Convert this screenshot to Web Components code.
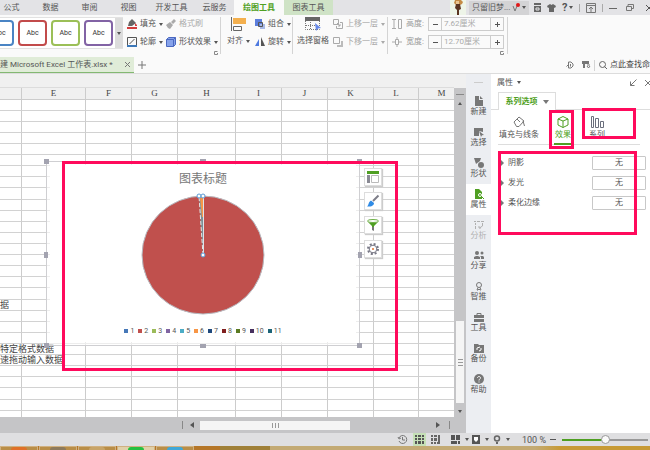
<!DOCTYPE html>
<html>
<head>
<meta charset="utf-8">
<title>Microsoft Excel 工作表.xlsx</title>
<style>
html,body{margin:0;height:100%;overflow:hidden}
body{--ink:#555;--dim:#aaa;--line:#d4d4d4;--green:#4f9f22;--mark:#ff0a5c;
 font:8px/12px Roboto,"Noto Sans CJK SC",sans-serif;color:var(--ink);background:#fafafa}
</style>
</head>
<body>
<office-app></office-app>
<script>
const BASE = `*{box-sizing:border-box}
button,input{font:inherit;color:inherit;background:none;border:0;padding:0;margin:0}
button{display:flex;align-items:center;white-space:nowrap}
svg{display:block;flex:none;overflow:visible}
.caret{width:0;height:0;border:2px solid transparent;border-top:3px solid currentColor;border-bottom:0;flex:none}
.sep{width:1px;background:var(--line);flex:none}`;
function define(name, css, html){
  customElements.define(name, class extends HTMLElement{
    connectedCallback(){
      if(this.shadowRoot) return;
      const root = this.attachShadow({mode:'open'});
      root.innerHTML = '<style>'+BASE+css+'</style>'+(typeof html==='function'?html(this):html);
    }
  });
}
const svg = (w,h,body) => `<svg width="${w}" height="${h}" viewBox="0 0 ${w} ${h}" fill="none" aria-hidden="true">${body}</svg>`;

/* ---------- title bar with ribbon tabs ---------- */
define('menu-tabs', `
:host{display:flex;height:15px;background:#e3e3e6;overflow:hidden}
nav{display:flex;flex:1;min-width:0}
nav button{justify-content:center;width:39px;flex:none}
nav button:first-child{width:31px;padding-right:8px}
nav button.wide{width:47px}
nav button.cur{width:50px;background:#fafafa;color:var(--green);font-weight:700}
nav button.alt{width:49px;background:#cfe3c6}
.user{display:flex;align-items:center;flex:none}
.who{height:14px;background:#d3d3d5;padding:0 3px;width:60px;justify-content:space-between;margin-left:3px}
.user button{height:14px}
.sys{gap:6px;display:flex;align-items:center;padding-left:5px;flex:none;width:121px}
.sys .sep{height:8px;background:#aaa}
.help{gap:2px;font-size:11px;font-weight:700}
`, `<nav><button>公式</button><button>数据</button><button>审阅</button><button>视图</button><button class="wide">开发工具</button><button>云服务</button><button class="cur">绘图工具</button><button class="alt">图表工具</button></nav>
<div class="user">${svg(16,15,'<path fill="#eef5e8" d="M0 0h16v15H0z"/><path fill="#c58b45" d="M5 0h6l2 2-1 2-2 1H6L4 3z"/><path fill="#5b3522" d="M6 4h4l1 5-2 1v5H7v-5L5 8z"/><path fill="#e9c592" d="M6 1h3v3H6z"/>')}
<button class="who"><span>只留旧梦...</span>${svg(8,12,'<path d="M1 4l2 5 2-5" stroke="#777"/><circle cx="6" cy="3" r="2" fill="#e01818"/>')}<i class="caret"></i></button></div>
<div class="sys">
<button aria-label="皮肤">${svg(7,9,'<path fill="#666" d="M0 0h7v2H0zM0 3h7v6H0z"/><path stroke="#e3e3e6" d="M2 5h3v2H2z"/>')}</button>
<button aria-label="外观">${svg(9,8,'<path fill="#666" d="M3 0l1.500 1L6 0l3 2-1 2-1-.5V8H2V3.500L1 4 0 2z"/>')}</button>
<button class="help" aria-label="帮助">?<i class="caret"></i></button>
<i class="sep"></i>
<button aria-label="功能区">${svg(10,10,'<path stroke="#777" d="M.5.500h9v9h-9zM0 2.500h10M5 9V4.500M3 6l2-2 2 2"/>')}</button>
<i class="sep"></i>
<button aria-label="最小化">${svg(8,8,'<path stroke="#666" d="M0 4.500h8"/>')}</button>
<button aria-label="还原" style="margin-left:3px">${svg(8,8,'<path stroke="#777" d="M2 2.500V.500h5.500v4H6M.5 2.500H5.500v4H.500z"/>')}</button>
<button aria-label="关闭" style="margin-left:6px">${svg(6,6,'<path stroke="#555" d="M0 0l6 6M6 0L0 6"/>')}</button></div>`);

/* ---------- ribbon ---------- */
define('style-swatch', `:host{display:block;width:29px;flex:none}
button{width:100%;height:26px;justify-content:center;border:2px solid var(--c);border-radius:4px;background:#fff;color:#333;font-size:7px}`,
 el => `<button style="--c:${el.getAttribute('color')}"><slot></slot></button>`);

define('tool-button', `:host{display:block;flex:none}
:host([off]){color:var(--dim)}
button{gap:3px;height:14px}
:host([tall]) button{flex-direction:column;height:30px;justify-content:space-between}
.t{display:flex;align-items:center;gap:3px}`,
 el => `<button><slot name="icon"></slot><span class="t"><slot></slot>${el.hasAttribute('menu')?'<i class="caret"></i>':''}</span></button>`);

define('size-field', `:host{display:flex;align-items:center;gap:4px;color:#999;height:14px}
label{width:18px;white-space:nowrap}
.f{display:flex;border:1px solid #ccc;height:14px;width:76px}
.f button{width:12px;justify-content:center;color:#555;flex:none}
input{flex:1;min-width:0;width:10px;border:solid #ccc;border-width:0 1px;padding-left:2px;color:#aaa}`,
 el => `<slot name="icon"></slot><label for="v">${el.getAttribute('label')}:</label><div class="f"><button aria-label="减">${svg(5,5,'<path stroke="#555" d="M0 2.500h5"/>')}</button><input id="v" value="${el.getAttribute('value')}"><button aria-label="加">${svg(5,5,'<path stroke="#555" d="M0 2.500h5M2.500 0v5"/>')}</button></div>`);

const ic = s => s.replace('<svg','<svg slot="icon"');
const corner = svg(4,4,'<path stroke="#888" d="M3.500.500h-3v3h3V2"/>');
define('ribbon-bar', `
:host{display:flex;height:42px;background:#fafafa;padding-top:2px;overflow:hidden}
.gal{display:flex;align-items:center;gap:4px;width:123px;height:32px;overflow:hidden;border:1px solid #e2e2e2;border-left:0;border-right:0;justify-content:flex-end;flex:none;background:#fff}
.gal button{width:8px;height:32px;background:#dcdcdc;justify-content:center;margin-left:-2px;flex:none}
.col{display:flex;flex-direction:column;gap:4px;flex:none}
.grp{display:flex;padding-left:4px;flex:none}
.sep{height:37px}
.corner{align-self:flex-end;margin:0 0 2px -4px;flex:none}
`, `<div class="gal"><style-swatch color="#4a84c4">Abc</style-swatch><style-swatch color="#c24b4b">Abc</style-swatch><style-swatch color="#9bbf57">Abc</style-swatch><style-swatch color="#8263a5">Abc</style-swatch><button aria-label="更多"><i class="caret"></i></button></div>
<div class="grp" style="width:97px;gap:4px">
 <div class="col" style="width:35px"><tool-button menu>${ic(svg(10,10,'<path fill="#666" d="M2 3l3-3 4 4-4 3H1z"/><path fill="#d23c3c" d="M0 8h10v2H0zM8 4l2 2v1H8z"/>'))}填充</tool-button>
 <tool-button menu>${ic(svg(10,10,'<path stroke="#555" d="M.5 8V.500h9V8M2.500 7l5-5"/><path fill="#3d78b8" d="M0 8h10v2H0z"/>'))}轮廓</tool-button></div>
 <div class="col"><tool-button off>${ic(svg(10,10,'<path fill="#aaa" d="M8 0l2 2-3 3-2-2zM4 3l3 3-3 4-2-1-2-3z"/>'))}格式刷</tool-button>
 <tool-button menu>${ic(svg(10,10,'<path fill="#86a2ea" stroke="#4a68c0" d="M.5 2.500l2-2h7v7l-2 2h-7z"/><path stroke="#4a68c0" d="M.5 2.500h7v7M7.500 2.500l2-2"/>'))}形状效果</tool-button></div>
 <span class="corner" style="margin-left:-8px">${corner}</span></div>
<i class="sep"></i>
<div class="grp" style="width:71px;gap:5px;padding-left:6px">
 <tool-button tall menu>${ic(svg(15,14,'<path stroke="#666" d="M.5 0v14M2.500 9.500h8v4h-8z"/><path fill="#f4b04e" d="M2 1h13v6H2z"/>'))}对齐</tool-button>
 <div class="col"><tool-button menu>${ic(svg(10,10,'<path fill="#5c7edc" d="M0 0h7v7H0z"/><path fill="#a9b9e6" d="M5 5h5v5H5z"/><path stroke="#555" d="M3.500 3.500h4v4h-4z"/>'))}组合</tool-button>
 <tool-button menu>${ic(svg(10,10,'<path fill="#4e7ae0" d="M4 2v7H0z"/><path fill="#555" d="M6 0v9h4z"/>'))}旋转</tool-button></div></div>
<i class="sep"></i>
<div class="grp" style="width:94px;gap:4px">
 <tool-button tall>${ic(svg(16,14,'<path fill="#666" d="M0 0h15v4H0z"/><path stroke="#777" stroke-dasharray="1 1" d="M.5 4v8.500h14V4M5.500 5v7M1 8.500h12"/><path fill="#6688e8" d="M10 6l6 5-3 .5-2 2.500z"/>'))}选择窗格</tool-button>
 <div class="col"><tool-button off menu>${ic(svg(10,10,'<path stroke="#aaa" d="M.5.500h5v5h-5zM7 3.500h2.500v6h-6V7M4 4l3 3M7 5v2H5"/>'))}上移一层</tool-button>
 <tool-button off menu>${ic(svg(10,10,'<path stroke="#aaa" d="M.5.500h6v6h-6z"/><path fill="#bbb" d="M8 4h2v6H4V8h4z"/>'))}下移一层</tool-button></div></div>
<i class="sep"></i>
<div class="grp" style="width:119px"><div class="col"><size-field label="高度" value="7.62厘米">${ic(svg(10,10,'<path stroke="#aaa" d="M0 .500h4M0 9.500h4M2 1v8M6.500.500h3v9h-3z"/>'))}</size-field>
<size-field label="宽度" value="12.70厘米">${ic(svg(10,10,'<path stroke="#aaa" d="M3.500 2.500h3v5h-3zM0 5h3M7 5h3M5 0v2M5 8v2"/>'))}</size-field></div>
<span class="corner">${corner}</span></div>
<i class="sep"></i>`);

/* ---------- document tabs ---------- */
define('doc-tabs', `
:host{display:flex;height:17px;align-items:center;border-bottom:1px solid #dcdcdc;background:#fafafa;overflow:hidden}
.tab{display:flex;align-items:center;width:134px;height:16px;background:#e0ecd8;border-bottom:1px solid #83b872;flex:none;white-space:nowrap}
.tab span{flex:1}
.tab button{padding-right:4px}
.add{margin-left:4px;flex:1}
.find{display:flex;align-items:center;gap:8px;width:84px;flex:none}
.find input{width:60px;margin-left:-5px;color:#444}
.find .sep{height:11px;margin:0 -4px}
`, `<div class="tab"><span>建 Microsoft Excel 工作表.xlsx *</span><button aria-label="关闭标签">${svg(5,5,'<path stroke="#777" d="M0 0l5 5M5 0L0 5"/>')}</button></div>
<button class="add" aria-label="新建标签">${svg(8,8,'<path stroke="#777" d="M4 0v8M0 4h8"/>')}</button>
<div class="find"><button aria-label="文档">${svg(8,8,'<path stroke="#777" d="M2.500 1H5l2 2v2L5 7H2.500zM.5 5.500L3 3M4.500 3v2.500"/>')}</button><button aria-label="切换">${svg(8,8,'<path fill="#777" d="M0 0h7v3H3v4H1V3H0z"/><path stroke="#777" d="M5 4h3M5 5l1.500 2L8 5"/>')}</button><i class="sep"></i><label for="q">${svg(8,8,'<circle cx="3.500" cy="3.500" r="3" stroke="#666"/><path stroke="#666" d="M5.500 5.500L8 8"/>')}</label><input id="q" aria-label="查找" value="点此查找命令"></div>`);

/* ---------- sheet ---------- */
define('sheet-grid', `
:host{display:flex;flex-direction:column;flex:1;min-width:0;position:relative;overflow:hidden;background:#fff}
.fx{height:14px;background:#f0f0f0;border-bottom:1px solid #dcdcdc;flex:none}
.wrap{flex:1;min-height:0;overflow:hidden}
table{border-collapse:separate;border-spacing:0;table-layout:fixed;width:465px;color:#444}
th{height:12px;padding:0;background:#f0f0f0;font:9px/11px "Liberation Serif",serif;border-right:1px solid #ccc;border-bottom:1px solid #ccc}
td{height:11px;padding:0;font:9px/10px "Liberation Sans","Noto Sans CJK SC",sans-serif;border-right:1px solid #ccc;border-bottom:1px solid #d2d2d2;white-space:nowrap}
tr:nth-child(9n) td{height:12px}
`, () => {
  const w=[22,64,46,46,58,46,46,46,45,46], cols=['','E','F','G','H','I','J','K','L','M'];
  const text={19:'据',23:'特定格式数据',24:'速拖动输入数据'};
  let rows='';
  for(let r=1;r<=29;r++) rows+='<tr>'+cols.map((c,i)=>'<td>'+(i===0&&text[r]?text[r]:'')+'</td>').join('')+'</tr>';
  return `<div class="fx"></div><div class="wrap"><table><colgroup>${w.map(x=>`<col style="width:${x}px">`).join('')}</colgroup><thead><tr>${cols.map(c=>`<th>${c}</th>`).join('')}</tr></thead><tbody>${rows}</tbody></table></div><slot></slot>`;
});

define('pie-chart', `
:host{position:absolute;left:46px;top:87px;width:314px;height:185px;border:1px solid #cfcfd2}
.card{height:100%;border:3px solid rgba(255,255,255,.6);background:#fff;background-clip:padding-box;display:flex;flex-direction:column;align-items:center;padding-top:6px}
h2{margin:0;font-size:12px;line-height:16px;font-weight:400;color:#777}
.pie{margin-top:8px}
ul{display:flex;gap:4px;list-style:none;margin:11px 0 0;padding:0;font-size:7px;line-height:10px;color:#555}
li{display:flex;align-items:center;gap:2px;white-space:nowrap}
li i{width:4px;height:4px;background:var(--c)}
.h{position:absolute;width:6px;height:4px;background:#a3a3b0}
.c{width:5px;height:5px}
.s{width:4px;height:6px}
`, () => {
  const c=['#4678b8','#c0504d','#9bbb59','#8064a2','#4bacc6','#f79646','#1f497d','#7f1f1f','#5a7a22','#47305f','#1c6478'];
  const hs=[['left:-3px;top:-3px','c'],['right:-3px;top:-3px','c'],['left:-3px;bottom:-3px','c'],['right:-3px;bottom:-3px','c'],['left:153px;top:-3px',''],['left:153px;bottom:-3px',''],['left:-3px;top:90px','s'],['right:-3px;top:90px','s']];
  return `<div class="card"><h2>图表标题</h2><div class="pie">${svg(124,120,'<ellipse cx="62" cy="60" rx="61" ry="59" fill="#c0504d" stroke="#b7bcc3"/><path d="M62 60L58 1h4z" fill="#7d8f96"/><path d="M61 22L59 2h3v20z" fill="#f79646"/><path d="M62 60L58 1" stroke="#e5e5e5" stroke-dasharray="4 2"/><path d="M62.500 60V1" stroke="#dde3ea"/><g fill="#fff" stroke="#5b9bd5"><circle cx="58" cy="1" r="2"/><circle cx="62" cy="1" r="2"/><circle cx="62" cy="60" r="2"/></g>')}</div><ul>${c.map((x,i)=>`<li><i style="--c:${x}"></i>${i+1}</li>`).join('')}</ul></div>${hs.map(h=>`<b class="h ${h[1]}" style="${h[0]}"></b>`).join('')}`;
});

define('chart-tools', `
:host{position:absolute;left:364px;top:94px;display:grid;gap:6px}
button{width:18px;height:18px;background:#fff;border:1px solid #ddd;box-shadow:1px 1px 1px #ccc;justify-content:center}
`, `<button aria-label="图表元素">${svg(12,12,'<path fill="#4f9f22" d="M0 0h12v3H0z"/><path fill="#8a8a94" d="M0 4h3v8H0z"/><path stroke="#bbb" d="M4.500 4.500h7v7h-7z"/>')}</button>
<button aria-label="图表样式">${svg(12,12,'<path stroke="#7d7d88" stroke-width="2" d="M11.500.500L6 6"/><path fill="#2f8be6" d="M4 5.500l3 2.500c0 3-4 4-7 3.500C2 10.500 1 7 4 5.500z"/>')}</button>
<button aria-label="图表筛选">${svg(12,12,'<path fill="#4f9f22" d="M0 2l5 5v2h2V7l5-5-2 1.500H2z"/><ellipse cx="6" cy="2" rx="5.500" ry="1.500" stroke="#6cae45"/><path fill="#777" d="M5 8h2v4L5 11z"/>')}</button>
<button aria-label="设置">${svg(12,12,'<circle cx="6" cy="6" r="5" stroke="#777785" stroke-width="2" stroke-dasharray="2 1.930"/><circle cx="6" cy="6" r="3.800" stroke="#777785"/><circle cx="6" cy="6" r="1" fill="#e07030"/>')}</button>`);

define('v-scroll', `
:host{display:flex;flex-direction:column;align-items:center;width:12px;background:#c5c5c7;flex:none;color:#555}
.top{width:100%;height:14px;background:#f0f0f0}
.split{width:8px;height:1px;background:#888;margin:6px 0 7px}
.thumb{width:8px;height:82px;background:#f5f5f5;display:grid;place-content:center}
.gap{flex:1}.caret{margin:7px 0 4px}
.up{transform:rotate(180deg);margin:0}
`, `<div class="top"></div><i class="split"></i><i class="caret up"></i><div class="gap"></div><div class="thumb">${svg(5,7,'<path stroke="#999" d="M0 .500h5M0 3.500h5M0 6.500h5"/>')}</div><i class="caret"></i>`);

define('h-scroll', `
:host{display:flex;align-items:center;height:16px;background:#c5c5c7;flex:none;padding-left:182px;padding-right:16px;color:#555}
.sep{height:8px;background:#888}
.thumb{width:150px;height:9px;background:#f5f5f5;display:grid;place-content:center;margin-left:6px}
.l{margin-left:7px}.gap{flex:1}.r{margin-right:9px}
`, `<i class="sep"></i><span class="l">${svg(4,6,'<path fill="#555" d="M4 0v6L0 3z"/>')}</span><div class="thumb">${svg(7,5,'<path stroke="#999" d="M.5 0v5M3.500 0v5M6.500 0v5"/>')}</div><i class="gap"></i><span class="r">${svg(4,6,'<path fill="#555" d="M0 0v6l4-3z"/>')}</span><i class="sep"></i>`);

/* ---------- side navigation ---------- */
define('side-nav', `
:host{display:flex;flex-direction:column;width:25px;background:#eceef2;flex:none;padding:8px 0 33px}
.grip{width:9px;height:1px;background:#ccc;margin:0 auto 9px;flex:none}
button{flex:1;flex-direction:column;justify-content:center}
.cur{background:#fff}
svg{color:#777}.off,.off svg{color:#b0b0b0}.cur svg{color:var(--green)}
`, () => {
  const g=(t,p,c='')=>`<button class="${c}">${svg(10,10,p)}${t}</button>`;
  return '<i class="grip"></i>'+
  g('新建','<path fill="currentColor" d="M1 0h4v4h4v6H1zM6 0l3 3H6z"/>')+
  g('选择','<path fill="currentColor" d="M0 1h9v4L5 4v5H0z"/><path fill="currentColor" d="M5 4l5 4-2 .3L7 10z"/>')+
  g('形状','<path fill="currentColor" d="M0 0h7l-1 3-4 3z"/><circle cx="7" cy="7" r="3" fill="currentColor"/>')+
  g('属性','<path fill="currentColor" d="M1 0h4l3 3v7H1z"/><circle cx="6" cy="6" r="1.500" stroke="#fff"/><path stroke="currentColor" d="M7 7l3 3"/>','cur')+
  g('分析','<path stroke="currentColor" d="M0 1.500h2M3 1.500h3M7 1.500h3M1.500 3v2M1.500 6v3M8.500 3v3l-3 2M7 8H5V6"/>','off')+
  g('分享','<circle cx="3" cy="3" r="2" fill="currentColor"/><circle cx="8" cy="3" r="1.500" fill="currentColor"/><path fill="currentColor" d="M0 9V7l2-1h2l2 1v2zM6 6h3l1 1v2H7V7z"/>')+
  g('智推','<circle cx="5" cy="4" r="2.500" stroke="currentColor"/><path stroke="currentColor" d="M4 6.500L3 9h1l1-1 1 1h1L6 6.500"/>')+
  g('工具','<path fill="currentColor" d="M0 3h10v3H0zM0 7h10v3H0z"/><path stroke="currentColor" d="M3 3V1.500h4V3"/>')+
  g('备份','<path fill="currentColor" d="M0 1h4l1 1h5v8H0z"/><path stroke="#fff" d="M3 7V5l3-1M7 5v2L5 8"/>')+
  g('帮助','<circle cx="5" cy="5" r="5" fill="currentColor"/><path stroke="#fff" d="M3.500 4c0-2 3-2 3 0 0 1-1.500 1-1.500 2.500M5 7.500v1"/>');
});

/* ---------- property panel ---------- */
define('effect-row', `:host{display:flex;align-items:center;height:14px}
.ar{width:0;height:0;border:3px solid transparent;border-left-color:#777;border-right:0;margin-right:4px}
label{flex:1}button{width:54px;height:14px;border:1px solid #c8c8c8;border-radius:1px;background:#fff;justify-content:center}`,
 el => `<i class="ar"></i><label for="b">${el.getAttribute('label')}</label><button id="b">无</button>`);

define('prop-panel', `
:host{display:block;width:159px;flex:none;background:#fff}
header{display:flex;align-items:center;gap:4px;height:17px;padding-left:6px}
header .sp{flex:1}header button{margin-right:4px}header button:last-child{margin-right:-1px}
.tabs{display:flex;height:19px}
.tabs i{border-bottom:1px solid #ddd;width:7px}
.tabs i.r{flex:1}
.tabs button{width:58px;border:1px solid #ddd;border-bottom:0;justify-content:center;gap:5px;color:var(--green);font-weight:700;margin-top:1px}
.tabs .down{width:0;height:0;border:3px solid transparent;border-top:4px solid #777;border-bottom:0}
.kinds{display:flex;margin:0 10px 0 7px;height:35px;border-bottom:1px solid #ddd}
.kinds button{flex-direction:column;width:42px;gap:1px;padding-top:6px}
.kinds .cur{color:var(--green);width:18px;margin:0 12px 0 14px;border-bottom:2px solid var(--green);height:35px}
.kinds .last{width:26px}
.rows{display:grid;gap:6px;padding:11px 4px 0 10px}
`, `<header>属性<i class="caret"></i><span class="sp"></span><button aria-label="停靠">${svg(7,7,'<path stroke="#777" d="M6.500.500l-6 6M.5 2.500v4h4"/>')}</button><button aria-label="关闭">${svg(6,6,'<path stroke="#777" d="M0 0l6 6M6 0L0 6"/>')}</button></header>
<div class="tabs"><i></i><button>系列选项<span class="down"></span></button><i class="r"></i></div>
<div class="kinds"><button>${svg(12,12,'<path stroke="#777" d="M1 6l5-5 5 4-5 5.500H3.500zM4 3l3 3M10 5l1.500 5"/>')}填充与线条</button>
<button class="cur">${svg(12,12,'<path stroke="#4f9f22" d="M1 3l5-2.500L11 3v6l-5 2.500L1 9zM1 3l5 2 5-2M6 5v6.500"/>')}效果</button>
<button class="last">${svg(12,12,'<path stroke="#6a6e7c" d="M.5.500h2v11h-2zM4.500 2.500h3v9h-3zM9.500 5.500h3v6h-3z"/>')}系列</button></div>
<div class="rows"><effect-row label="阴影"></effect-row><effect-row label="发光"></effect-row><effect-row label="柔化边缘"></effect-row></div>`);

/* ---------- status bar ---------- */
define('status-bar', `
:host{display:flex;align-items:center;justify-content:flex-end;height:13px;background:#dfdfe1;flex:none;padding-right:2px}
button{height:13px;gap:5px;justify-content:center;flex:none}
.on{background:#c5e0b6;width:13px;margin:0 5px 0 6px}
.m{width:21px}.first{margin-left:9px}
output{width:24px;margin-left:10px;white-space:nowrap;font-size:9px}
input{appearance:none;width:86px;height:11px;flex:none;margin-left:6px}
input::-webkit-slider-runnable-track{height:2px;background:linear-gradient(90deg,#4f9f22 50%,#999 50%)}
input::-webkit-slider-thumb{appearance:none;width:9px;height:9px;border-radius:50%;background:#fafafa;border:1px solid #999;margin-top:-4px}
.minus{margin-left:4px}
`, `<button aria-label="历史">${svg(9,9,'<path stroke="#777" d="M1 3a4 4 0 1 1 0 3M0 2l1 2 2-1M4.500 2v3H7"/>')}</button>
<button class="on" aria-label="普通视图">${svg(9,9,'<path fill="#555" d="M0 0h9v9H0z"/><path stroke="#c5e0b6" d="M0 2.500h9M0 5.500h9M2.500 0v9M6.500 0v9"/>')}</button>
<button aria-label="分页预览">${svg(9,9,'<path fill="#666" d="M0 0h6v6H0zM7 0h2v9H0V7h7z"/><path stroke="#dfdfe1" d="M0 2.500h6M2.500 0v9M5.500 7v2"/>')}</button>
<button class="m first" aria-label="页面布局">${svg(9,9,'<path fill="#555" d="M0 0h4v5H0zM5 0h4v5H5zM0 6h6v3H0zM7 6h2v3H7z"/>')}<i class="caret"></i></button>
<button class="m" aria-label="阅读模式">${svg(8,9,'<path fill="#555" d="M0 0h8v9H0z"/><path fill="#fff" d="M2 2h4v3L4 7 2 5z"/>')}<i class="caret"></i></button>
<button class="m" aria-label="护眼模式">${svg(8,9,'<circle cx="4" cy="3.500" r="2.500" stroke="#666" stroke-width="1.500"/><path fill="#666" d="M3 7h2v2H3z"/>')}<i class="caret"></i></button>
<output>100 %</output><button class="minus" aria-label="缩小">${svg(6,3,'<path stroke="#555" d="M0 1.500h6"/>')}</button><input type="range" aria-label="缩放" min="0" max="200" value="100">`);

define('task-strip', `
:host{display:flex;height:4px;flex:none;overflow:hidden;gap:1px;background:linear-gradient(90deg,#b57628 0 220px,#a08038 220px 270px,#c3aa74 270px 535px,#c79a35 560px)}
i{width:38px;background:#b98e48;border:1px solid #d0b080;border-bottom:0;display:flex;justify-content:center}
i:first-child{width:21px;border-left:0}
i::after{content:"";width:16px;height:3px;background:var(--c);border-radius:4px 4px 0 0}
.w{background:#e0d0a8}
`, `<i style="--c:#e07028"></i><i style="--c:#8d7a5c"></i><i style="--c:#c8a468"></i><i class="w" style="--c:#25c040"></i><i style="--c:#40a8d8"></i>`);

/* ---------- highlight frame lying over the page ---------- */
define('mark-box', `:host{position:absolute;border:3px solid var(--mark);pointer-events:none;box-sizing:border-box}`, '');

define('office-app', `
:host{display:flex;flex-direction:column;height:100vh;position:relative;overflow:hidden}
main{display:flex;flex:1;min-height:0}
.left{display:flex;flex-direction:column;flex:1;min-width:0}
.view{display:flex;flex:1;min-height:0}
`, `<menu-tabs></menu-tabs><ribbon-bar></ribbon-bar><doc-tabs></doc-tabs>
<main><div class="left"><div class="view"><sheet-grid><pie-chart></pie-chart><chart-tools></chart-tools></sheet-grid><v-scroll></v-scroll></div><h-scroll></h-scroll></div><side-nav></side-nav><prop-panel></prop-panel></main>
<status-bar></status-bar><task-strip></task-strip>
<mark-box style="left:62px;top:161px;width:336px;height:210px"></mark-box>
<mark-box style="left:549px;top:110px;width:25px;height:39px"></mark-box>
<mark-box style="left:582px;top:108px;width:54px;height:31px"></mark-box>
<mark-box style="left:498px;top:151px;width:139px;height:84px"></mark-box>`);
</script>
</body>
</html>
